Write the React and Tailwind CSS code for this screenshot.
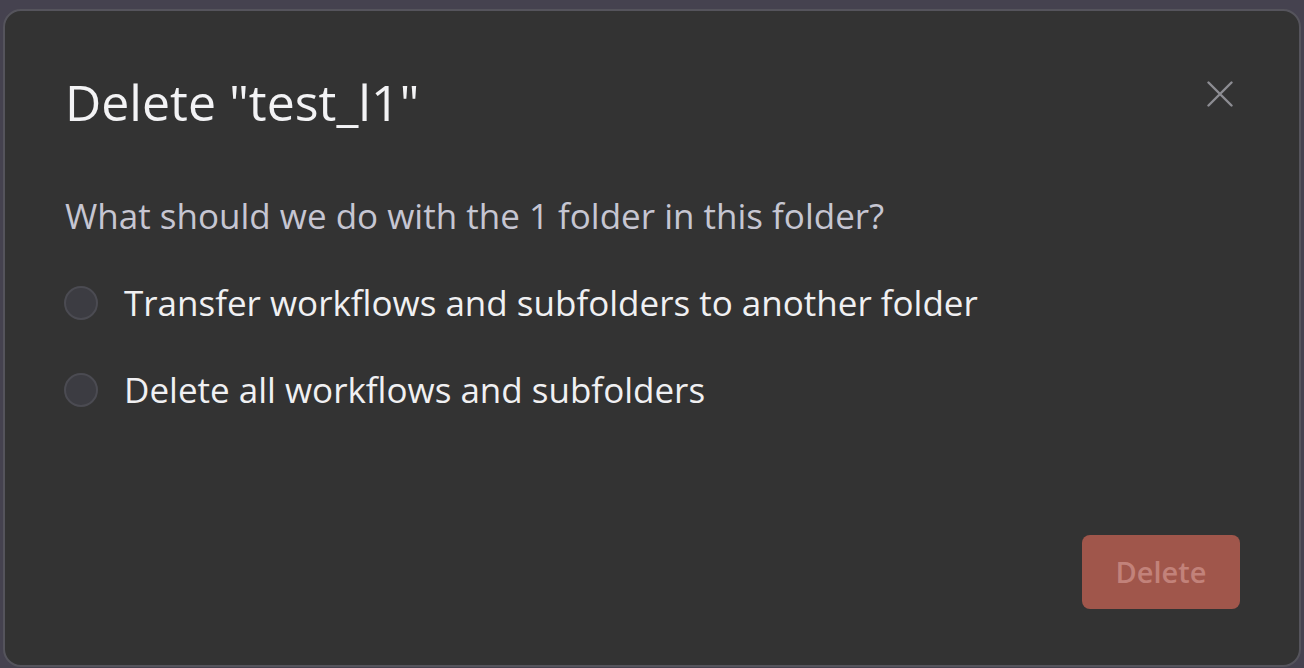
export default function App() {
  const options = [
    'Transfer workflows and subfolders to another folder',
    'Delete all workflows and subfolders',
  ];

  return (
    <div
      className="w-[1304px] h-[668px] bg-[#45424f] pl-[3px] pt-[9px] overflow-hidden"
      style={{ fontFamily: '"Open Sans", "Noto Sans", sans-serif' }}
    >
      <div className="w-[1298px] h-[658px] bg-[#333333] border-2 border-[#55545c] rounded-[18px] flex flex-col pl-[60px] pr-[59px] pt-[62px] pb-[56px]">
        <div className="flex items-start justify-between">
          <h1 className="text-[50px] leading-[64px] text-[#f3f3f5] font-normal -mt-[3px]">
            Delete "test_l1"
          </h1>
          <button className="mt-[8px] mr-[7px] w-[26px] h-[26px] flex items-center justify-center text-[#8d8d93]">
            <svg width="26" height="26" viewBox="0 0 26 26" fill="none" stroke="currentColor" strokeWidth="2.4" strokeLinecap="round">
              <path d="M1.5 1.5 L24.5 24.5 M24.5 1.5 L1.5 24.5" />
            </svg>
          </button>
        </div>

        <p className="mt-[58px] text-[35px] leading-[48px] text-[#c6c6d2]">
          What should we do with the 1 folder in this folder?
        </p>

        <div className="mt-[39px] flex flex-col gap-[39px]">
          {options.map((label) => (
            <label key={label} className="flex items-center gap-[26px]">
              <span className="w-[34px] h-[34px] rounded-full bg-[#3c3c42] border-2 border-[#4b4b52] shrink-0 -ml-[1px]" />
              <span className="text-[35px] leading-[48px] text-[#f0f0f2]">{label}</span>
            </label>
          ))}
        </div>

        <div className="mt-auto flex justify-end">
          <button className="w-[158px] h-[74px] rounded-[8px] bg-[#a0564b] text-[#c2827a] text-[29px] font-semibold">
            Delete
          </button>
        </div>
      </div>
    </div>
  );
}
